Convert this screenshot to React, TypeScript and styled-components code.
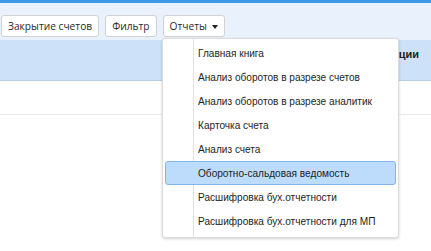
import React from "react";
import styled, { createGlobalStyle } from "styled-components";

const Global = createGlobalStyle`
  html, body { margin: 0; padding: 0; background: #ffffff; }
  body { font-family: "Open Sans", "Liberation Sans", Arial, sans-serif; }
`;

const Page = styled.div`
  position: relative;
  width: 431px;
  height: 251px;
  overflow: hidden;
  background: #ffffff;
`;

const TopStrip = styled.div`
  height: 3px;
  background: #3d9be8;
`;

const Toolbar = styled.div`
  height: 37px;
  box-sizing: border-box;
  padding: 12px 0 0 1px;
  background: #e9f2fc;
  display: flex;
  align-items: flex-start;
  gap: 6px;
`;

const ToolButton = styled.button`
  height: 22px;
  box-sizing: border-box;
  padding: 0 6px;
  border: 1px solid #d2d2d2;
  border-radius: 3px;
  background: #ffffff;
  color: #2a2a2a;
  font-family: "Open Sans", "Liberation Sans", sans-serif;
  font-size: 10.2px;
  display: flex;
  align-items: center;
  gap: 5px;
  cursor: pointer;
`;

const Caret = styled.span`
  width: 0;
  height: 0;
  border-left: 3.5px solid transparent;
  border-right: 3.5px solid transparent;
  border-top: 4px solid #222;
  margin-top: 1px;
`;

const GridHeader = styled.div`
  height: 41px;
  box-sizing: border-box;
  background: #cde1f9;
  border-bottom: 1px solid #b9cde3;
  display: flex;
  align-items: center;
  justify-content: flex-end;
  padding-right: 12px;
`;

const HeaderCell = styled.span`
  font-family: "Liberation Sans", Arial, sans-serif;
  font-size: 11px;
  font-weight: bold;
  color: #222;
  margin-top: -12px;
`;

const GridRow = styled.div`
  height: 34px;
  box-sizing: border-box;
  border-bottom: 1px solid #ebebeb;
`;

const Menu = styled.div`
  position: absolute;
  left: 162px;
  top: 38px;
  width: 237px;
  box-sizing: border-box;
  padding: 2px 2px 4px 2px;
  background: #ffffff;
  border: 1px solid #dcdcdc;
  border-radius: 3px;
  box-shadow: 0 1px 3px rgba(0, 0, 0, 0.18);
  font-family: "Liberation Sans", Arial, sans-serif;
`;

const Gutter = styled.div`
  position: absolute;
  left: 30px;
  top: 0;
  bottom: 0;
  width: 1px;
  background: #e2e2e2;
`;

const Item = styled.div<{ $active?: boolean }>`
  position: relative;
  height: 24px;
  box-sizing: border-box;
  display: flex;
  align-items: center;
  padding-left: 32px;
  font-size: 10.1px;
  color: #1e1e1e;
  border-radius: 3px;
  border: 1px solid ${(p) => (p.$active ? "#82b6ea" : "transparent")};
  background: ${(p) => (p.$active ? "#bddcfb" : "transparent")};
  white-space: nowrap;
`;

const items = [
  "Главная книга",
  "Анализ оборотов в разрезе счетов",
  "Анализ оборотов в разрезе аналитик",
  "Карточка счета",
  "Анализ счета",
  "Оборотно-сальдовая ведомость",
  "Расшифровка бух.отчетности",
  "Расшифровка бух.отчетности для МП",
];

export default function App() {
  return (
    <Page>
      <Global />
      <TopStrip />
      <Toolbar>
        <ToolButton>Закрытие счетов</ToolButton>
        <ToolButton>Фильтр</ToolButton>
        <ToolButton>
          Отчеты <Caret />
        </ToolButton>
      </Toolbar>
      <GridHeader>
        <HeaderCell>Операции</HeaderCell>
      </GridHeader>
      <GridRow />
      <Menu>
        <Gutter />
        {items.map((t, i) => (
          <Item key={t} $active={i === 5}>
            {t}
          </Item>
        ))}
      </Menu>
    </Page>
  );
}
